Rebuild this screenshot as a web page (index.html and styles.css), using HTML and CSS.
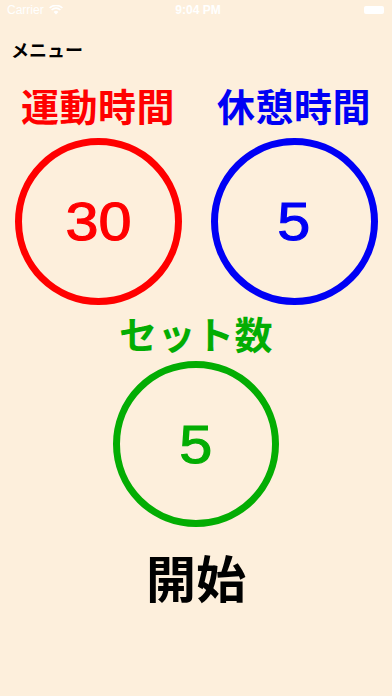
FILE: index.html
```html
<!DOCTYPE html>
<html lang="ja">
<head>
<meta charset="utf-8">
<title>Interval Timer</title>
<link rel="stylesheet" href="styles.css">
</head>
<body>
<div class="screen">
  <div class="status-bar">
    <div class="status-left">
      <span class="carrier">Carrier</span>
      <svg class="wifi" width="14" height="10" viewBox="0 0 14 10">
        <path d="M7 9.5 L4.6 6.9 A3.4 3.4 0 0 1 9.4 6.9 Z" fill="#fff"/>
        <path d="M2.6 5 A6.2 6.2 0 0 1 11.4 5" stroke="#fff" stroke-width="1.6" fill="none"/>
        <path d="M0.6 3 A9 9 0 0 1 13.4 3" stroke="#fff" stroke-width="1.6" fill="none"/>
      </svg>
    </div>
    <div class="status-time">9:04 PM</div>
    <div class="status-right">
      <div class="battery"></div>
    </div>
  </div>

  <div class="menu-row">
    <span class="menu-btn">メニュー</span>
  </div>

  <div class="pair-row">
    <div class="setting red">
      <div class="label">運動時間</div>
      <div class="ring"><span class="num">30</span></div>
    </div>
    <div class="setting blue">
      <div class="label">休憩時間</div>
      <div class="ring"><span class="num">5</span></div>
    </div>
  </div>

  <div class="setting green single">
    <div class="label">セット数</div>
    <div class="ring"><span class="num">5</span></div>
  </div>

  <div class="start">開始</div>
</div>
</body>
</html>
```

FILE: styles.css
```css
html, body {
  margin: 0;
  padding: 0;
  background: #fdefdc;
}
body {
  font-family: "Noto Sans CJK JP", "Noto Sans", sans-serif;
}
.screen {
  width: 392px;
  height: 696px;
  display: flex;
  flex-direction: column;
  background: #fdefdc;
  overflow: hidden;
}
.status-bar {
  height: 20px;
  display: flex;
  align-items: center;
  justify-content: space-between;
  padding: 0 8px 0 7px;
  color: #fff;
  font-family: "Liberation Sans", Arial, sans-serif;
  font-size: 12px;
  position: relative;
}
.status-left {
  display: flex;
  align-items: center;
  gap: 5px;
}
.status-time {
  position: absolute;
  left: 0;
  right: 0;
  text-align: center;
  font-weight: 700;
  padding-left: 4px;
}
.battery {
  width: 20px;
  height: 8px;
  border-radius: 2px;
  background: #fff;
}
.menu-row {
  height: 22px;
  margin-top: 18px;
  display: flex;
  align-items: center;
  padding-left: 11px;
}
.menu-btn {
  font-size: 18px;
  line-height: 22px;
  font-weight: 600;
  color: #000;
}
.pair-row {
  display: flex;
  margin-top: 23px;
}
.setting {
  display: flex;
  flex-direction: column;
  align-items: center;
}
.pair-row .setting {
  width: 196px;
}
.label {
  font-size: 38px;
  line-height: 44px;
  font-weight: 700;
  letter-spacing: 0.5px;
}
.ring {
  width: 167px;
  height: 167px;
  box-sizing: border-box;
  border-radius: 50%;
  border: 7px solid currentColor;
  display: flex;
  align-items: center;
  justify-content: center;
  margin-top: 11px;
}
.num {
  font-family: "Liberation Sans", Arial, sans-serif;
  font-size: 53px;
  line-height: 53px;
  font-weight: 400;
  display: inline-block;
  transform: scaleX(1.12);
  -webkit-text-stroke: 1.1px currentColor;
}
.red { color: #ff0000; }
.blue { color: #0000f5; }
.green { color: #03ad03; }
.single {
  margin-top: 6px;
}
.single .ring {
  width: 166px;
  height: 166px;
  margin-top: 6px;
}
.start {
  margin-top: 19px;
  text-align: center;
  font-size: 50px;
  line-height: 60px;
  font-weight: 600;
  color: #000;
}
```
